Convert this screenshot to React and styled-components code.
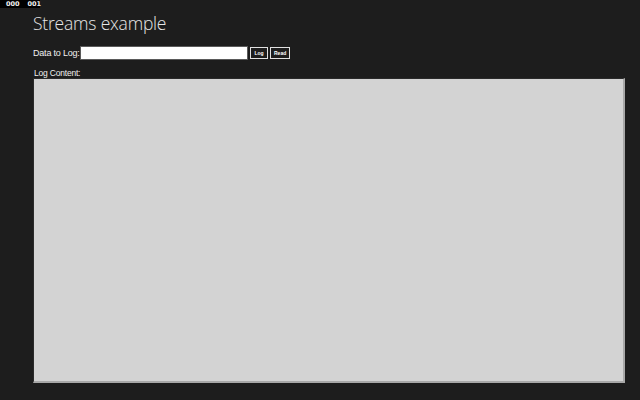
import React from 'react';
import styled, { createGlobalStyle } from 'styled-components';

const Global = createGlobalStyle`
  html, body {
    margin: 0;
    padding: 0;
    background: #1d1d1d;
    height: 100%;
  }
  body {
    font-family: "Liberation Sans", Arial, sans-serif;
    color: #ffffff;
  }
`;

function App() {
  return (
    <>
      <Global />
      <Counters>
        <Counter>000</Counter>
        <Counter>001</Counter>
      </Counters>
      <Page>
        <Title>Streams example</Title>
        <InputRow>
          <Label>Data to Log:</Label>
          <DataInput type="text" />
          <SmallButton>Log</SmallButton>
          <SmallButton>Read</SmallButton>
        </InputRow>
        <ContentLabel>Log Content:</ContentLabel>
        <LogArea readOnly />
      </Page>
    </>
  );
}

export default App;

const Counters = styled.div`
  position: absolute;
  top: 0;
  left: 0;
  display: flex;
  background: #000000;
  height: 8px;
  width: 40px;
  box-sizing: border-box;
  padding-left: 6px;
  gap: 8px;
`;

const Counter = styled.span`
  font-family: "DejaVu Sans", sans-serif;
  font-size: 6.5px;
  font-weight: bold;
  line-height: 8px;
  color: #f4f4f4;
`;

const Page = styled.div`
  padding: 9px 16px 0 33px;
  display: flex;
  flex-direction: column;
`;

const Title = styled.h1`
  margin: 0;
  font-family: "Open Sans", "Liberation Sans", sans-serif;
  font-weight: 300;
  font-size: 17.5px;
  letter-spacing: -0.2px;
  line-height: 28px;
  color: #e6e6e6;
`;

const InputRow = styled.div`
  display: flex;
  align-items: center;
  margin-top: 9px;
  height: 14px;
`;

const Label = styled.span`
  font-family: "Liberation Sans", Arial, sans-serif;
  font-size: 9px;
  letter-spacing: -0.2px;
  color: #f0f0f0;
  width: 46px;
  white-space: nowrap;
  margin-right: 1px;
`;

const DataInput = styled.input`
  box-sizing: border-box;
  width: 168px;
  height: 14px;
  margin: 0;
  padding: 0 2px;
  border: 1px solid #5a5a5a;
  background: #ffffff;
  outline: none;
`;

const SmallButton = styled.button`
  box-sizing: border-box;
  height: 12px;
  margin: 0 0 0 2px;
  padding: 0 3px;
  background: #1d1d1d;
  border: 1px solid #e0e0e0;
  color: #ffffff;
  font-family: "Liberation Sans", sans-serif;
  font-size: 5px;
  font-weight: bold;
  line-height: 10px;
  min-width: 18px;
`;

const ContentLabel = styled.div`
  font-family: "Liberation Sans", Arial, sans-serif;
  font-size: 8.5px;
  letter-spacing: -0.2px;
  line-height: 10px;
  margin-top: 8px;
  margin-left: 1px;
  color: #f0f0f0;
`;

const LogArea = styled.textarea`
  box-sizing: border-box;
  width: 592px;
  height: 305px;
  margin: 0;
  resize: none;
  background: #d3d3d3;
  border-style: solid;
  border-width: 1px 2px 2px 1px;
  border-color: #2a2a2a #a8a8a8 #a8a8a8 #2a2a2a;
  outline: none;
`;
